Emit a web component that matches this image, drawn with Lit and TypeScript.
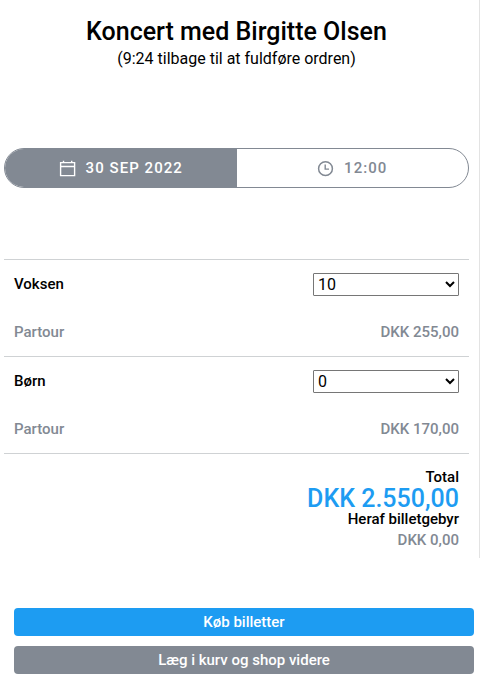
import { LitElement, html, css } from "lit";
import { customElement } from "lit/decorators.js";

interface Ticket {
  name: string;
  kind: string;
  price: string;
  count: number;
}

const tickets: Ticket[] = [
  { name: "Voksen", kind: "Partour", price: "DKK 255,00", count: 10 },
  { name: "Børn", kind: "Partour", price: "DKK 170,00", count: 0 },
];

@customElement("app-root")
export class AppRoot extends LitElement {
  static styles = css`
    :host {
      display: block;
      box-sizing: border-box;
      height: 680px;
      background: #fff;
      color: #000;
      font: 500 15px/20px Roboto, sans-serif;
      overflow: hidden;
    }
    * {
      box-sizing: border-box;
    }
    .order {
      width: 480px;
      height: 558px;
      border-right: 1px solid #e3e3e3;
      padding: 17px 10px 0 4px;
    }
    h1 {
      margin: 0;
      font-size: 25px;
      line-height: 30px;
      font-weight: 500;
      text-align: center;
    }
    .timer {
      font-size: 16px;
      line-height: 24px;
      font-weight: 400;
      text-align: center;
    }
    .when {
      display: flex;
      height: 40px;
      margin: 77px 0 71px;
      border: 1px solid #828993;
      border-radius: 20px;
      overflow: hidden;
      font-size: 15px;
      letter-spacing: 1.05px;
      color: #828993;
    }
    .part {
      flex: 1;
      display: flex;
      align-items: center;
      justify-content: center;
      gap: 10px;
    }
    .date {
      background: #828993;
      color: #fff;
    }
    .part svg {
      display: block;
      width: 17px;
      height: 17px;
      fill: none;
      stroke: currentColor;
    }
    .ticket {
      height: 97px;
      border-top: 1px solid #cfd2d4;
      padding: 13px 10px 0;
    }
    .row {
      display: flex;
      justify-content: space-between;
      align-items: center;
      height: 23px;
    }
    .row span {
      padding-bottom: 2px;
    }
    .sub {
      margin-top: 25px;
      color: #828993;
    }
    select {
      width: 146px;
      height: 23px;
      margin: 0;
      padding: 0;
      font: 400 16px Roboto, sans-serif;
      color: #000;
      background-color: #fff;
      border: 1px solid #767676;
      border-radius: 1px;
    }
    .totals {
      border-top: 1px solid #cfd2d4;
      padding: 13px 10px 0;
      text-align: right;
    }
    .sum {
      font-size: 25px;
      line-height: 24px;
      color: #1d9cf2;
    }
    .fee-label {
      line-height: 16px;
    }
    .fee {
      color: #828993;
      line-height: 26px;
    }
    .actions {
      display: flex;
      flex-direction: column;
      gap: 10px;
      margin: 50px 7px 0 14px;
    }
    button {
      height: 28px;
      padding: 0;
      border: 0;
      border-radius: 4px;
      font: 500 15px/28px Roboto, sans-serif;
      color: #fff;
      background: #828993;
    }
    .buy {
      background: #1d9cf2;
    }
  `;

  render() {
    return html`
      <section class="order">
        <h1>Koncert med Birgitte Olsen</h1>
        <div class="timer">(9:24 tilbage til at fuldføre ordren)</div>
        <div class="when">
          <div class="part date">
            <svg viewBox="0 0 17 17">
              <path d="M1.6 2.6h14v13h-14zM1.6 6.5h14M4.5 0.8v2M12.7 0.8v2" stroke-width="1.4" />
            </svg>
            <span>30 SEP 2022</span>
          </div>
          <div class="part">
            <svg viewBox="0 0 17 17">
              <circle cx="8.5" cy="8.7" r="6.9" stroke-width="1.5" />
              <path d="M8.2 4.5v4.6h3.8" stroke-width="1.4" />
            </svg>
            <span>12:00</span>
          </div>
        </div>
        ${tickets.map(
          (t) => html`
            <div class="ticket">
              <div class="row">
                <span>${t.name}</span>
                <select aria-label=${t.name}>
                  ${Array.from(
                    { length: 11 },
                    (_, i) => html`<option ?selected=${i === t.count}>${i}</option>`
                  )}
                </select>
              </div>
              <div class="row sub"><span>${t.kind}</span><span>${t.price}</span></div>
            </div>
          `
        )}
        <div class="totals">
          <div>Total</div>
          <div class="sum">DKK 2.550,00</div>
          <div class="fee-label">Heraf billetgebyr</div>
          <div class="fee">DKK 0,00</div>
        </div>
      </section>
      <div class="actions">
        <button class="buy">Køb billetter</button>
        <button>Læg i kurv og shop videre</button>
      </div>
    `;
  }
}
